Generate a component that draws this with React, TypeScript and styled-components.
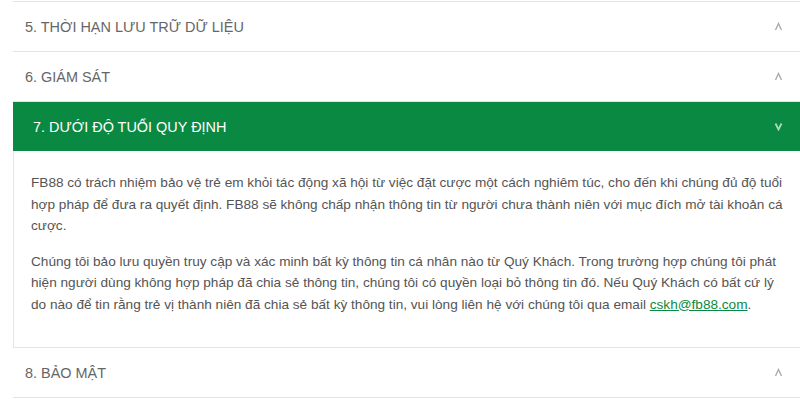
import React from "react";
import styled, { createGlobalStyle } from "styled-components";

const Global = createGlobalStyle`
  html, body { margin: 0; padding: 0; background: #ffffff; overflow: hidden; }
  body { font-family: "Liberation Sans", Arial, sans-serif; }
`;

const Page = styled.div`
  width: 800px;
  height: 400px;
  padding: 1px 0 0 13px;
  box-sizing: border-box;
`;

const Accordion = styled.div`
  width: 787px;
  border-bottom: 1px solid #e3e3e3;
`;

const Item = styled.div`
  border-top: 1px solid #e3e3e3;
`;

const Header = styled.div<{ $open?: boolean }>`
  height: 49px;
  display: flex;
  align-items: center;
  justify-content: space-between;
  padding: 0 17px 0 ${(p) => (p.$open ? "20px" : "12px")};
  background: ${(p) => (p.$open ? "#0a8942" : "#ffffff")};
  color: ${(p) => (p.$open ? "#ffffff" : "#666666")};
  font-size: 14.45px;
`;

const Chevron = styled.svg`
  width: 9px;
  height: 9px;
  flex: none;
`;

const Panel = styled.div`
  border-left: 1px solid #e6e6e6;
  padding: 21px 8px 18px 17px;
  color: #555555;
  font-size: 13.62px;
  line-height: 21.5px;
`;

const Para = styled.p`
  margin: 0 0 14px 0;
`;

const Mail = styled.a`
  color: #0a8942;
  text-decoration: underline;
`;

const Arrow = ({ open }: { open?: boolean }) => (
  <Chevron viewBox="0 0 9 9">
    {open ? (
      <path d="M1.5 1.5 L4.5 7.5 L7.5 1.5" fill="none" stroke="#a6dcb8" strokeWidth="1.8" />
    ) : (
      <path d="M1.5 8 L4.5 1.5 L7.5 8" fill="none" stroke="#a8a8a8" strokeWidth="1.3" />
    )}
  </Chevron>
);

export default function App() {
  return (
    <Page>
      <Global />
      <Accordion>
        <Item>
          <Header>
            <span>5. THỜI HẠN LƯU TRỮ DỮ LIỆU</span>
            <Arrow />
          </Header>
        </Item>
        <Item>
          <Header>
            <span>6. GIÁM SÁT</span>
            <Arrow />
          </Header>
        </Item>
        <Item>
          <Header $open>
            <span>7. DƯỚI ĐỘ TUỔI QUY ĐỊNH</span>
            <Arrow open />
          </Header>
          <Panel>
            <Para>
              FB88 có trách nhiệm bảo vệ trẻ em khỏi tác động xã hội từ việc đặt cược một cách nghiêm túc, cho đến khi chúng đủ độ tuổi hợp pháp để đưa ra quyết định. FB88 sẽ không chấp nhận thông tin từ người chưa thành niên với mục đích mở tài khoản cá cược.
            </Para>
            <Para>
              Chúng tôi bảo lưu quyền truy cập và xác minh bất kỳ thông tin cá nhân nào từ Quý Khách. Trong trường hợp chúng tôi phát hiện người dùng không hợp pháp đã chia sẻ thông tin, chúng tôi có quyền loại bỏ thông tin đó. Nếu Quý Khách có bất cứ lý do nào để tin rằng trẻ vị thành niên đã chia sẻ bất kỳ thông tin, vui lòng liên hệ với chúng tôi qua email <Mail href="#">cskh@fb88.com</Mail>.
            </Para>
          </Panel>
        </Item>
        <Item>
          <Header>
            <span>8. BẢO MẬT</span>
            <Arrow />
          </Header>
        </Item>
      </Accordion>
    </Page>
  );
}
